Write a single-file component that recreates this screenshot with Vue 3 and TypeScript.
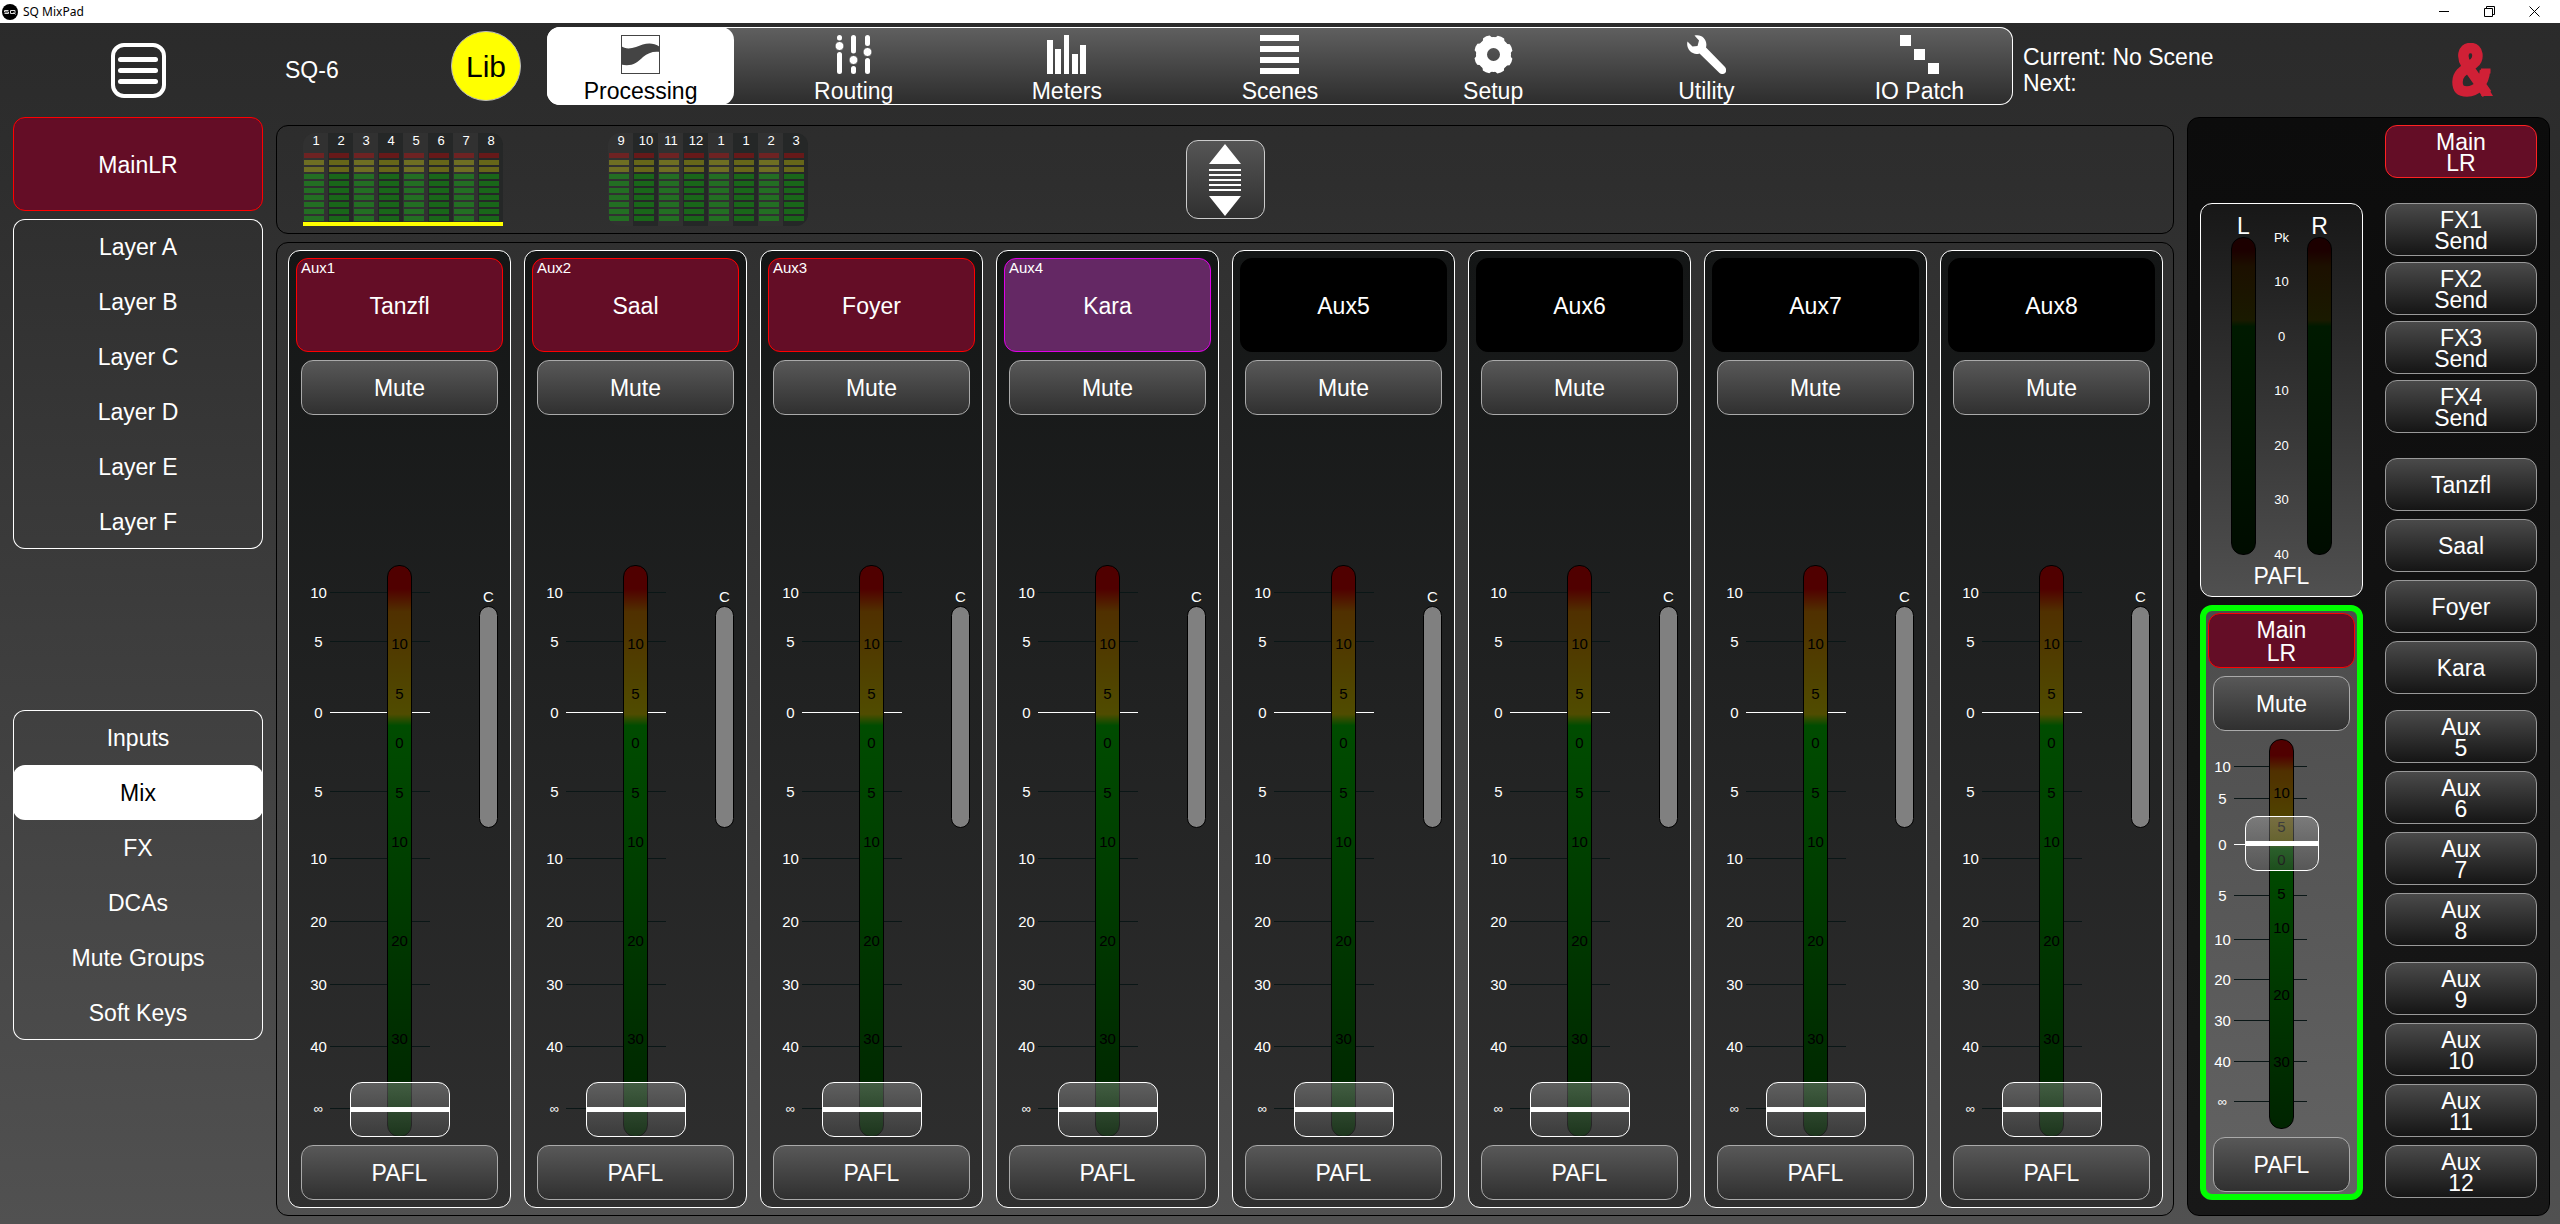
<script setup lang="ts">
import { ref } from 'vue'

interface Strip {
  id: string
  name: string
  tone: 'red' | 'purple' | 'plain'
}
interface Mark {
  label: string
  at: number
}
interface Send {
  lines: string[]
}

const tabs = ['Processing', 'Routing', 'Meters', 'Scenes', 'Setup', 'Utility', 'IO Patch']
const activeTab = ref('Processing')

const layers = ['Layer A', 'Layer B', 'Layer C', 'Layer D', 'Layer E', 'Layer F']
const views = ['Inputs', 'Mix', 'FX', 'DCAs', 'Mute Groups', 'Soft Keys']
const activeView = ref('Mix')

const meterBanks = [
  { labels: ['1', '2', '3', '4', '5', '6', '7', '8'], active: true },
  { labels: ['9', '10', '11', '12', '1', '1', '2', '3'], active: false },
]

const strips: Strip[] = [
  { id: 'Aux1', name: 'Tanzfl', tone: 'red' },
  { id: 'Aux2', name: 'Saal', tone: 'red' },
  { id: 'Aux3', name: 'Foyer', tone: 'red' },
  { id: 'Aux4', name: 'Kara', tone: 'purple' },
  { id: '', name: 'Aux5', tone: 'plain' },
  { id: '', name: 'Aux6', tone: 'plain' },
  { id: '', name: 'Aux7', tone: 'plain' },
  { id: '', name: 'Aux8', tone: 'plain' },
]

// Fader law, as a share of the knob travel measured from the top.
const faderMarks: Mark[] = [
  { label: '10', at: 0 },
  { label: '5', at: 9.5 },
  { label: '0', at: 23.2 },
  { label: '5', at: 38.5 },
  { label: '10', at: 51.4 },
  { label: '20', at: 63.5 },
  { label: '30', at: 75.7 },
  { label: '40', at: 87.7 },
  { label: '∞', at: 99.6 },
]

// Meter law, as a share of the bar height measured from the top.
const meterMarks: Mark[] = [
  { label: '10', at: 13.8 },
  { label: '5', at: 22.5 },
  { label: '0', at: 31.1 },
  { label: '5', at: 39.8 },
  { label: '10', at: 48.4 },
  { label: '20', at: 65.7 },
  { label: '30', at: 82.9 },
]

const paflScale = ['10', '0', '10', '20', '30', '40']

const sendGroups: Send[][] = [
  [1, 2, 3, 4].map((n) => ({ lines: [`FX${n}`, 'Send'] })),
  ['Tanzfl', 'Saal', 'Foyer', 'Kara'].map((name) => ({ lines: [name] })),
  [5, 6, 7, 8].map((n) => ({ lines: ['Aux', `${n}`] })),
  [9, 10, 11, 12].map((n) => ({ lines: ['Aux', `${n}`] })),
]

const levels = ref<number[]>(strips.map(() => 0))
const mainLevel = ref(77)
</script>

<template>
  <div class="app">
    <div class="titlebar">
      <svg class="app-icon" viewBox="0 0 16 16" aria-hidden="true">
        <circle cx="8" cy="8" r="8" fill="#000" />
        <path d="M6.500 6.500H2.500v1.500h4v1.500h-4M13 6.500H8.500v3H13zM11.500 8.500l2 2" fill="none" stroke="#ddd" stroke-width="1" />
      </svg>
      <span class="app-name">SQ MixPad</span>
      <button class="win" aria-label="Minimise">
        <svg viewBox="0 0 11 11"><path d="M0 5.500h10" stroke="#000" /></svg>
      </button>
      <button class="win" aria-label="Restore">
        <svg viewBox="0 0 11 11" fill="none" stroke="#000"><path d="M.5 2.500h8v8h-8zM2.500 2.500v-2h8v8h-2" /></svg>
      </button>
      <button class="win" aria-label="Close">
        <svg viewBox="0 0 11 11" stroke="#000"><path d="M.5 .5l10 10M10.500 .5l-10 10" /></svg>
      </button>
    </div>

    <header class="top">
      <div class="menu-cell">
        <button class="menu" aria-label="Menu"><i></i><i></i><i></i></button>
      </div>
      <span class="model">SQ-6</span>
      <button class="lib">Lib</button>
      <nav class="tabs">
        <button v-for="t in tabs" :key="t" class="tab" :class="{ on: t === activeTab }" @click="activeTab = t">
          <svg viewBox="0 0 39 39" fill="currentColor" aria-hidden="true">
            <template v-if="t === 'Processing'">
              <rect x=".5" y=".5" width="38" height="38" fill="#fff" stroke="#444" />
              <path d="M0 11C4 14 9 14 15 12C23 9 30 6 39 12V17C32 16 27 18 22 22C16 28 10 32 0 29.500Z" fill="#444" />
            </template>
            <template v-else-if="t === 'Routing'">
              <path d="M5.500 2.500V3M5.500 19.500V36.500M19.500 2.500V16M19.500 33.500V36.500M33.500 2.500V8.500M33.500 25.500V36.500" stroke="currentColor" stroke-width="5" stroke-linecap="round" />
              <g stroke="#4c4c4c">
                <circle cx="5.500" cy="11" r="4.500" />
                <circle cx="19.500" cy="25" r="4.500" />
                <circle cx="33.500" cy="17" r="4.500" />
              </g>
            </template>
            <path v-else-if="t === 'Meters'" d="M0 5h6v34H0zM8 14h6v25H8zM17 0h5v39h-5zM25 19h6v20h-6zM33 10h6v29h-6z" />
            <path v-else-if="t === 'Scenes'" d="M0 0h39v6H0zM0 11h39v6H0zM0 22h39v6H0zM0 33h39v6H0z" />
            <template v-else-if="t === 'Setup'">
              <circle cx="19.500" cy="19.500" r="12" fill="none" stroke="currentColor" stroke-width="11" />
              <g v-for="n in 8" :key="n" :transform="`rotate(${n * 45 - 22} 19.5 19.5)`">
                <path d="M13 6L16 .5Q19.500 -.5 23 .5L26 6Z" />
              </g>
            </template>
            <path v-else-if="t === 'Utility'" d="M7.500 0.500C15 -1.500 21 5 19 12.500L38 32C41.500 37 36.500 41 32.500 38L12.500 18.500C5.500 21 -1.500 14 .5 6.500L5.500 11.500L10.500 11L12 5.500Z" />
            <path v-else d="M0 0h11v11H0zM14 14h11v11H14zM28 28h11v11H28z" />
          </svg>
          <span>{{ t }}</span>
        </button>
      </nav>
      <div class="scene">
        <div>Current: No Scene</div>
        <div>Next:</div>
      </div>
      <div class="brand">
        <svg viewBox="0 0 41 54" role="img" aria-label="Allen and Heath" fill="none" stroke="#d02036" stroke-linejoin="round">
          <path d="M35 51L14 21C10 15 10 5 18.500 5C27 5 27 16 22 20C17 25 5.500 28 5.500 39C5.500 46 9 48.500 15 48.500C24 48.500 32 41 33 27" stroke-width="10.500" />
          <path d="M29 25.500h9.500v5h-9.500zM29 53h12l-6-10z" fill="#d02036" stroke="none" />
        </svg>
      </div>
    </header>

    <main class="body">
      <aside class="side">
        <button class="main-lr red">MainLR</button>
        <div class="list">
          <button v-for="l in layers" :key="l">{{ l }}</button>
        </div>
        <div class="list lower">
          <button v-for="v in views" :key="v" :class="{ on: v === activeView }" @click="activeView = v">{{ v }}</button>
        </div>
      </aside>

      <section class="centre">
        <div class="overview">
          <div class="banks">
            <div v-for="(b, i) in meterBanks" :key="i" class="bank" :class="{ active: b.active }">
              <div v-for="(l, j) in b.labels" :key="j" class="col">
                <span>{{ l }}</span>
                <i v-for="n in 10" :key="n"></i>
              </div>
            </div>
          </div>
          <button class="expand" aria-label="Expand meters">
            <svg viewBox="0 0 34 74" aria-hidden="true">
              <path d="M17 1L33 21H1ZM17 73L33 53H1Z" fill="#fff" />
              <path d="M1 27h32M1 32h32M1 37h32M1 42h32M1 47h32" stroke="#fff" stroke-width="2" />
            </svg>
          </button>
        </div>

        <div class="strips">
          <article v-for="(s, i) in strips" :key="s.name" class="strip">
            <button class="name" :class="s.tone"><small v-if="s.id">{{ s.id }}</small>{{ s.name }}</button>
            <button class="key">Mute</button>
            <div class="fader">
              <div class="bar"></div>
              <div class="marks">
                <div v-for="(m, k) in faderMarks" :key="k" class="mark" :class="{ zero: m.label === '0', inf: m.label === '∞' }" :style="{ top: m.at + '%' }">
                  <span>{{ m.label }}</span>
                </div>
              </div>
              <span v-for="(m, k) in meterMarks" :key="k" class="inner" :style="{ top: m.at + '%' }">{{ m.label }}</span>
              <input v-model.number="levels[i]" type="range" min="0" max="100" :aria-label="s.name + ' level'" />
              <div class="pan"><span>C</span><i></i></div>
            </div>
            <button class="key">PAFL</button>
          </article>
        </div>
      </section>

      <section class="right">
        <div class="masters">
          <div class="pafl">
            <div class="lane"><span>L</span><i></i></div>
            <div class="scale">
              <span>Pk</span>
              <div class="steps">
                <span v-for="(p, i) in paflScale" :key="i">{{ p }}</span>
              </div>
            </div>
            <div class="lane"><span>R</span><i></i></div>
            <div class="caption">PAFL</div>
          </div>
          <article class="strip master">
            <button class="name red">Main<br />LR</button>
            <button class="key">Mute</button>
            <div class="fader">
              <div class="bar"></div>
              <div class="marks">
                <div v-for="(m, k) in faderMarks" :key="k" class="mark" :class="{ zero: m.label === '0', inf: m.label === '∞' }" :style="{ top: m.at + '%' }">
                  <span>{{ m.label }}</span>
                </div>
              </div>
              <span v-for="(m, k) in meterMarks" :key="k" class="inner" :style="{ top: m.at + '%' }">{{ m.label }}</span>
              <input v-model.number="mainLevel" type="range" min="0" max="100" aria-label="Main LR level" />
            </div>
            <button class="key">PAFL</button>
          </article>
        </div>
        <div class="sends">
          <button class="send red">Main<br />LR</button>
          <div v-for="(g, i) in sendGroups" :key="i" class="group">
            <button v-for="s in g" :key="s.lines.join()" class="send">
              <template v-for="(line, k) in s.lines" :key="k"><br v-if="k" />{{ line }}</template>
            </button>
          </div>
        </div>
      </section>
    </main>
  </div>
</template>

<style>
body {
  margin: 0;
}
</style>

<style scoped>
* {
  box-sizing: border-box;
}
.app {
  display: flex;
  flex-direction: column;
  min-height: 100vh;
  font-family: "Liberation Sans", Arial, sans-serif;
  font-size: 23px;
  color: #fff;
  background: linear-gradient(#2a2a2a, #2e2e2e 15%, #515151);
}
button {
  margin: 0;
  padding: 2px 0 0;
  border: 0;
  background: none;
  color: inherit;
  font: inherit;
}

.titlebar {
  display: flex;
  align-items: center;
  height: 23px;
  padding-left: 2px;
  background: #fff;
  color: #000;
}
.app-icon {
  width: 16px;
  height: 16px;
}
.app-name {
  flex: 1;
  margin-left: 5px;
  font: 12px "Noto Sans", "Open Sans", sans-serif;
}
.win {
  display: flex;
  justify-content: center;
  align-items: center;
  width: 45px;
  height: 21px;
  padding: 0;
}
.win:last-child {
  margin-right: 3px;
}
.win svg {
  width: 11px;
  height: 11px;
}

.top {
  display: flex;
  align-items: center;
  height: 94px;
  padding: 0 10px 0 13px;
}
.menu-cell {
  display: flex;
  justify-content: center;
  width: 250px;
}
.menu {
  display: flex;
  flex-direction: column;
  justify-content: center;
  align-items: center;
  gap: 6px;
  width: 55px;
  height: 55px;
  padding: 0;
  border: 4px solid #fff;
  border-radius: 13px;
}
.menu i {
  width: 40px;
  height: 5px;
  border-radius: 3px;
  background: #fff;
}
.model {
  width: 166px;
  margin-left: 22px;
}
.lib {
  align-self: flex-start;
  width: 70px;
  height: 70px;
  margin: 8px 26px 0 0;
  border: 1px solid #bbb;
  border-radius: 50%;
  background: #ff0;
  color: #000;
  font-size: 30px;
}
.tabs {
  display: flex;
  flex: 1;
  align-self: flex-start;
  gap: 26px;
  height: 78px;
  margin-top: 4px;
  border-radius: 13px;
  background: linear-gradient(#606060, #2c2c2c);
  box-shadow: inset 0 0 0 1px #fff;
}
.tab {
  display: flex;
  flex: 1;
  flex-direction: column;
  align-items: center;
  height: 78px;
  padding-top: 8px;
  border-radius: 13px;
  line-height: 26px;
  white-space: nowrap;
}
.tab svg {
  width: 39px;
  height: 39px;
  margin-bottom: 4px;
}
.tab.on {
  background: #fff;
  color: #000;
}
.scene {
  width: 381px;
  margin-left: 10px;
  line-height: 26px;
}
.brand {
  display: flex;
  justify-content: center;
  width: 146px;
}
.brand svg {
  width: 41px;
  height: 54px;
  margin-right: 10px;
}

.body {
  display: grid;
  flex: 1;
  grid-template-columns: 250px 1fr 363px;
  gap: 13px;
  padding: 0 10px 8px 13px;
}
.red {
  border: 1px solid #f00;
  background: #640d26;
}
.purple {
  border: 1px solid #e000e8;
  background: #642864;
}
.plain {
  border: 1px solid #000;
  background: #000;
}

.side {
  display: flex;
  flex-direction: column;
}
.main-lr {
  height: 94px;
  border-radius: 12px;
}
.list {
  display: flex;
  flex-direction: column;
  margin-top: 8px;
  border-radius: 12px;
  box-shadow: inset 0 0 0 1px #fff;
}
.list.lower {
  margin-top: 161px;
}
.list button {
  height: 55px;
  border-radius: 12px;
}
.list .on {
  background: #fff;
  color: #000;
}

.centre {
  display: flex;
  flex-direction: column;
  gap: 8px;
  padding-top: 8px;
}
.overview {
  display: grid;
  grid-template-columns: 1fr auto 1fr;
  height: 109px;
  padding: 7px 26px;
  border: 1px solid #000;
  border-radius: 12px;
}
.banks {
  display: flex;
  gap: 105px;
}
.bank {
  display: flex;
  height: 93px;
  overflow: hidden;
  border-radius: 12px;
}
.bank.active {
  border-bottom: 4px solid #ff0;
  border-radius: 12px 12px 0 0;
}
.col {
  display: flex;
  flex-direction: column;
  gap: 2px;
  width: 25px;
  padding-left: 1px;
  background: #313131;
  font-size: 13px;
}
.col:nth-child(even) {
  background: #252727;
}
.col span {
  height: 18px;
  line-height: 16px;
  text-align: center;
}
.col i {
  width: 20px;
  height: 5px;
  background: #236e23;
}
.col:nth-child(even) i {
  background: #196619;
}
.col i:nth-of-type(-n + 3) {
  background: #6e6e23;
}
.col:nth-child(even) i:nth-of-type(-n + 3) {
  background: #666619;
}
.col i:first-of-type {
  background: #6e2323;
}
.col:nth-child(even) i:first-of-type {
  background: #661919;
}
.expand {
  display: flex;
  justify-content: center;
  align-items: center;
  width: 79px;
  height: 79px;
  margin-top: 7px;
  padding: 0;
  border: 1px solid #ccc;
  border-radius: 12px;
  background: linear-gradient(#555, #303030);
}
.expand svg {
  width: 34px;
  height: 74px;
}

.strips {
  display: flex;
  flex: 1;
  gap: 13px;
  padding: 7px 10px 7px 11px;
  border: 1px solid #000;
  border-radius: 12px;
}
.strip {
  display: flex;
  flex: 1;
  flex-direction: column;
  gap: 8px;
  padding: 7px;
  border: 1px solid #fff;
  border-radius: 12px;
  background: linear-gradient(#141616, #2f2f2f);
}
.name {
  position: relative;
  height: 94px;
  border-radius: 12px;
}
.name small {
  position: absolute;
  top: 0;
  left: 4px;
  font-size: 15px;
}
.key {
  height: 55px;
  margin: 0 5px;
  border: 1px solid #aaa;
  border-radius: 12px;
  background: linear-gradient(#585858, #303030);
}
.fader {
  position: relative;
  display: flex;
  flex: 1;
  justify-content: center;
  min-height: 300px;
  margin-top: 142px;
  font-size: 15px;
}
.bar {
  width: 25px;
  border: 1px solid #000;
  border-radius: 12px;
  background: linear-gradient(#500000 4%, #503000 8%, #504c00 26%, #004c00 28%, #002400);
}
.marks {
  position: absolute;
  inset: 27px 0;
}
.mark {
  position: absolute;
  left: calc(50% - 70px);
  width: 100px;
  height: 1px;
  background: linear-gradient(90deg, #0a1616 57px, transparent 57px 82px, #0a1616 82px);
}
.mark.zero {
  background: linear-gradient(90deg, #fff 57px, transparent 57px 82px, #fff 82px);
}
.mark span {
  position: absolute;
  top: -9px;
  right: 100%;
  width: 22px;
  line-height: 20px;
  text-align: center;
}
.mark.inf span {
  font-size: 13px;
}
.inner {
  position: absolute;
  left: 0;
  width: 100%;
  margin-top: -10px;
  line-height: 20px;
  text-align: center;
  color: #000;
}
.fader input {
  position: absolute;
  top: 0;
  left: calc(50% - 50px);
  width: 100px;
  height: 100%;
  margin: 0;
  appearance: none;
  writing-mode: vertical-lr;
  direction: rtl;
  background: none;
}
.fader input::-webkit-slider-thumb {
  appearance: none;
  width: 100px;
  height: 55px;
  border: 1px solid #fff;
  border-radius: 12px;
  background:
    linear-gradient(#fff, #fff) 0 24px / 100% 5px no-repeat,
    linear-gradient(rgba(200, 200, 200, 0.33), rgba(150, 150, 150, 0.32) 45%, rgba(90, 90, 90, 0.32));
}
.pan {
  position: absolute;
  top: 22px;
  right: 5px;
  width: 19px;
  line-height: 19px;
  text-align: center;
}
.pan i {
  display: block;
  height: 222px;
  border: 1px solid #000;
  border-radius: 10px;
  background: #808080;
}

.right {
  display: flex;
  gap: 22px;
  padding: 7px 12px;
  border: 1px solid #000;
  border-radius: 12px;
  background: linear-gradient(#0c0c0c, #181818);
}
.masters {
  display: flex;
  flex: 1;
  flex-direction: column;
  gap: 8px;
  padding: 78px 0 8px;
}
.pafl {
  display: grid;
  grid-template-rows: 340px auto;
  grid-template-columns: 25px 1fr 25px;
  align-content: start;
  height: 394px;
  padding: 11px 30px 0;
  border: 1px solid #fff;
  border-radius: 12px;
  background: linear-gradient(#171717, #505050);
}
.lane {
  display: flex;
  flex-direction: column;
  text-align: center;
  line-height: 22px;
}
.lane i {
  height: 318px;
  border: 1px solid #000;
  border-radius: 12px;
  background: linear-gradient(#1c0000 4%, #1c1000 9%, #1a1a00 26%, #001a00 28%, #000c00);
}
.scale {
  display: flex;
  flex-direction: column;
  gap: 28px;
  padding-top: 15px;
  font-size: 13px;
  line-height: 16px;
  text-align: center;
}
.steps {
  display: flex;
  flex-direction: column;
  flex-shrink: 0;
  justify-content: space-between;
  height: 289px;
}
.caption {
  grid-column: 1 / -1;
  line-height: 42px;
  text-align: center;
}
.master {
  padding: 2px;
  border: 6px solid #0f0;
  background: linear-gradient(#4c4c4c, #636363);
}
.master .name {
  height: 55px;
  line-height: 23px;
}
.master .fader {
  margin-top: 0;
}
.master .mark {
  left: calc(50% - 48px);
  width: 73px;
  background: linear-gradient(90deg, #0a1616 35px, transparent 35px 60px, #0a1616 60px);
}
.master .mark.zero {
  background: linear-gradient(90deg, #fff 35px, transparent 35px 60px, #fff 60px);
}
.master .fader input {
  left: calc(50% - 37px);
  width: 74px;
}
.master .fader input::-webkit-slider-thumb {
  width: 74px;
}

.sends {
  display: flex;
  flex-direction: column;
  width: 152px;
}
.send {
  height: 53px;
  border: 1px solid #999;
  border-radius: 12px;
  background: linear-gradient(#4a4a4a, #151515);
  line-height: 21px;
}
.send.red {
  border-color: #f22;
  background: #640d26;
}
.group {
  display: flex;
  flex-direction: column;
  gap: 8px;
  margin-top: 16px;
}
.group:nth-of-type(1) {
  gap: 6px;
  margin-top: 25px;
}
.group:nth-of-type(2) {
  margin-top: 25px;
}
</style>
